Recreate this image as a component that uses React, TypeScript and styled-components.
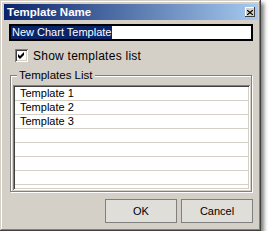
import React from 'react';
import styled, { createGlobalStyle } from 'styled-components';

const GlobalStyle = createGlobalStyle`
  html, body {
    margin: 0;
    padding: 0;
    background: #ffffff;
  }
  body {
    font-family: "Liberation Sans", Arial, sans-serif;
    font-size: 11px;
    color: #000000;
  }
`;

const Dialog = styled.div`
  box-sizing: border-box;
  width: 261px;
  height: 231px;
  padding: 4px 3px 3px 4px;
  background: #d4d0c8;
  display: flex;
  flex-direction: column;
  box-shadow:
    inset -1px -1px #404040,
    inset 1px 1px #d4d0c8,
    inset -2px -2px #808080,
    inset 2px 2px #ffffff,
    3px 3px 4px rgba(0, 0, 0, 0.5);
`;

const TitleBar = styled.div`
  height: 16px;
  padding: 0 3px 0 3px;
  display: flex;
  align-items: center;
  justify-content: space-between;
  background: linear-gradient(to right, #0a246a, #a6caf0);
  color: #ffffff;
  font-weight: bold;
  font-size: 11.5px;
`;

const CloseButton = styled.div`
  box-sizing: border-box;
  width: 10px;
  height: 10px;
  display: flex;
  align-items: center;
  justify-content: center;
  background: #d4d0c8;
  box-shadow:
    inset -1px -1px #404040,
    inset 1px 1px #ffffff;
`;

const Body = styled.div`
  flex: 1;
  display: flex;
  flex-direction: column;
  padding: 4px 5px 0 5px;
`;

const TextBox = styled.div`
  box-sizing: border-box;
  height: 17px;
  border: 2px solid #000000;
  background: #ffffff;
  display: flex;
  align-items: center;
  font-size: 11px;
`;

const Selected = styled.span`
  background: #0a246a;
  color: #ffffff;
  line-height: 13px;
  padding: 0 1px;
`;

const CheckRow = styled.div`
  margin-top: 8px;
  padding-left: 6px;
  display: flex;
  align-items: center;
  gap: 5px;
  height: 13px;
  font-size: 12px;
  letter-spacing: 0.25px;
`;

const CheckBox = styled.div`
  box-sizing: border-box;
  width: 13px;
  height: 13px;
  background: #ffffff;
  display: flex;
  align-items: center;
  justify-content: center;
  box-shadow:
    inset 1px 1px #808080,
    inset -1px -1px #ffffff,
    inset 2px 2px #404040,
    inset -2px -2px #d4d0c8;
`;

const Group = styled.div`
  position: relative;
  margin: 13px 1px 0 1px;
  height: 117px;
  box-sizing: border-box;
  border: 1px solid #808080;
  box-shadow:
    inset 1px 1px #ffffff,
    1px 1px #ffffff;
  padding: 9px 1px 1px 2px;
`;

const GroupLabel = styled.span`
  position: absolute;
  top: -7px;
  left: 6px;
  padding: 0 2px;
  background: #d4d0c8;
  line-height: 13px;
  font-size: 11.5px;
`;

const ListBox = styled.div`
  box-sizing: border-box;
  height: 105px;
  background: #ffffff;
  padding: 2px;
  overflow: hidden;
  box-shadow:
    inset 1px 1px #808080,
    inset -1px -1px #ffffff,
    inset 2px 2px #404040,
    inset -2px -2px #d4d0c8;
`;

const ListRow = styled.div`
  height: 13px;
  line-height: 13px;
  padding-left: 5px;
  border-bottom: 1px solid #d4d0c8;
`;

const Footer = styled.div`
  margin-top: 7px;
  display: flex;
  justify-content: flex-end;
  gap: 4px;
`;

const Button = styled.div`
  box-sizing: border-box;
  width: 72px;
  height: 24px;
  border: 1px solid #808080;
  background: #e0ded9;
  display: flex;
  align-items: center;
  justify-content: center;
  font-size: 11px;
`;

const rows = ['Template 1', 'Template 2', 'Template 3', '', '', '', '', ''];

export default function App() {
  return (
    <>
      <GlobalStyle />
      <Dialog>
        <TitleBar>
          <span>Template Name</span>
          <CloseButton>
            <svg width="6" height="5" viewBox="0 0 6 5">
              <path d="M0 0 L6 5 M6 0 L0 5" stroke="#000" strokeWidth="1.2" />
            </svg>
          </CloseButton>
        </TitleBar>
        <Body>
          <TextBox>
            <Selected>New Chart Template</Selected>
          </TextBox>
          <CheckRow>
            <CheckBox>
              <svg width="7" height="7" viewBox="0 0 7 7">
                <polygon points="0,2 2,4 6,0 6,3 2,7 0,5" fill="#000" />
              </svg>
            </CheckBox>
            <span>Show templates list</span>
          </CheckRow>
          <Group>
            <GroupLabel>Templates List</GroupLabel>
            <ListBox>
              {rows.map((r, i) => (
                <ListRow key={i}>{r}</ListRow>
              ))}
            </ListBox>
          </Group>
          <Footer>
            <Button>OK</Button>
            <Button>Cancel</Button>
          </Footer>
        </Body>
      </Dialog>
    </>
  );
}
